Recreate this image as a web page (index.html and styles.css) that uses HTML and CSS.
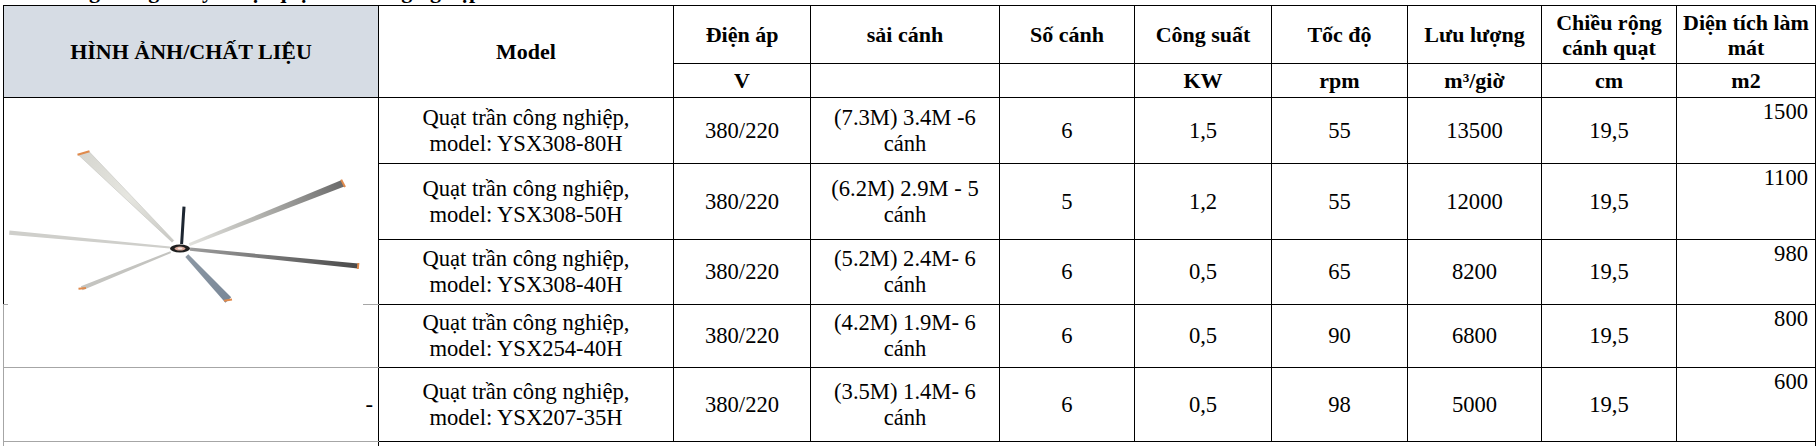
FILE: index.html
```html
<!DOCTYPE html>
<html lang="vi">
<head>
<meta charset="utf-8">
<title>Thông số quạt trần công nghiệp</title>
<link rel="stylesheet" href="styles.css">
</head>
<body>
<div class="page">
  <div class="title"><span>Bảng thông số kỹ thuật quạt trần công nghiệp</span></div>
  <table class="spec">
    <colgroup>
      <col class="c-img"><col class="c-model"><col class="c-volt"><col class="c-span"><col class="c-num">
      <col class="c-pow"><col class="c-rpm"><col class="c-flow"><col class="c-width"><col class="c-area">
    </colgroup>
    <thead>
      <tr class="r-h1">
        <th rowspan="2" class="th-img">HÌNH ẢNH/CHẤT LIỆU</th>
        <th rowspan="2">Model</th>
        <th>Điện áp</th>
        <th>sải cánh</th>
        <th>Số cánh</th>
        <th>Công suất</th>
        <th>Tốc độ</th>
        <th>Lưu lượng</th>
        <th>Chiều rộng<br>cánh quạt</th>
        <th>Diện tích làm<br>mát</th>
      </tr>
      <tr class="r-h2">
        <th>V</th><th></th><th></th><th>KW</th><th>rpm</th><th>m³/giờ</th><th>cm</th><th>m2</th>
      </tr>
    </thead>
    <tbody>
      <tr class="r1">
        <td rowspan="3" class="img-cell">
          <svg class="fan" viewBox="0 0 355 210" width="355" height="210" aria-label="Quạt trần công nghiệp 6 cánh">
            <defs>
              <linearGradient id="gb1" gradientUnits="userSpaceOnUse" x1="165" y1="143" x2="75" y2="55">
                <stop offset="0" stop-color="#c9c9c4"/><stop offset="0.5" stop-color="#e6e6e0"/><stop offset="1" stop-color="#d6d6d0"/>
              </linearGradient>
              <linearGradient id="gb2" gradientUnits="userSpaceOnUse" x1="181" y1="147" x2="335" y2="85">
                <stop offset="0" stop-color="#e2e2de"/><stop offset="0.45" stop-color="#b4b4b0"/><stop offset="1" stop-color="#6a6a6a"/>
              </linearGradient>
              <linearGradient id="gb4" gradientUnits="userSpaceOnUse" x1="182" y1="151" x2="350" y2="168">
                <stop offset="0" stop-color="#9c9c9c"/><stop offset="0.6" stop-color="#6c6c6c"/><stop offset="1" stop-color="#4a4a4a"/>
              </linearGradient>
              <linearGradient id="gb6" gradientUnits="userSpaceOnUse" x1="179" y1="157" x2="220" y2="202">
                <stop offset="0" stop-color="#8c98a4"/><stop offset="1" stop-color="#7a8898"/>
              </linearGradient>
            </defs>
            <rect width="355" height="210" fill="#fff"/>
            <polygon points="162.1,148.4 1.5,132.4 1.1,136.8 161.9,150.4" fill="#cfcfcb"/>
            <polygon points="165.7,142.4 81,53.5 70,56.5 164.1,144.2" fill="url(#gb1)" stroke="#bdbdb8" stroke-width="0.5"/>
            <polygon points="162.3,153.2 72.9,188.3 74.5,192.3 163.1,155" fill="#c4c4c0"/>
            <polygon points="180.7,145.2 333.7,82.1 336.3,88.5 181.9,148" fill="url(#gb2)"/>
            <polygon points="182.15,149.6 350.25,165.5 349.75,170.5 181.85,152.8" fill="url(#gb4)"/>
            <polygon points="180.3,156.2 223.2,199.3 217.4,204.7 177.3,159" fill="url(#gb6)"/>
            <line x1="69.5" y1="56.8" x2="81.5" y2="53.2" stroke="#e08a4c" stroke-width="2"/>
            <line x1="333.2" y1="81.6" x2="337" y2="89" stroke="#e08a4c" stroke-width="2"/>
            <line x1="350.4" y1="165" x2="349.8" y2="171" stroke="#e08a4c" stroke-width="2"/>
            <line x1="70.5" y1="190.8" x2="78" y2="190" stroke="#e08a4c" stroke-width="2"/>
            <line x1="216" y1="202.8" x2="224" y2="201.6" stroke="#e08a4c" stroke-width="2"/>
            <line x1="176" y1="108.7" x2="173.6" y2="146" stroke="#1d2631" stroke-width="3"/>
            <ellipse cx="172" cy="150.5" rx="10" ry="4" fill="#1f1f1f"/>
            <ellipse cx="172" cy="150.6" rx="5.5" ry="2" fill="#d8a89a"/>
            <ellipse cx="172" cy="150.6" rx="2.5" ry="1" fill="#f3e6e0"/>
          </svg>
        </td>
        <td>Quạt trần công nghiệp,<br>model: YSX308-80H</td>
        <td>380/220</td>
        <td>(7.3M) 3.4M -6<br>cánh</td>
        <td>6</td><td>1,5</td><td>55</td><td>13500</td><td>19,5</td>
        <td class="area">1500</td>
      </tr>
      <tr class="r2">
        <td>Quạt trần công nghiệp,<br>model: YSX308-50H</td>
        <td>380/220</td>
        <td>(6.2M) 2.9M - 5<br>cánh</td>
        <td>5</td><td>1,2</td><td>55</td><td>12000</td><td>19,5</td>
        <td class="area">1100</td>
      </tr>
      <tr class="r3">
        <td>Quạt trần công nghiệp,<br>model: YSX308-40H</td>
        <td>380/220</td>
        <td>(5.2M) 2.4M- 6<br>cánh</td>
        <td>6</td><td>0,5</td><td>65</td><td>8200</td><td>19,5</td>
        <td class="area">980</td>
      </tr>
      <tr class="r4">
        <td class="blank"></td>
        <td>Quạt trần công nghiệp,<br>model: YSX254-40H</td>
        <td>380/220</td>
        <td>(4.2M) 1.9M- 6<br>cánh</td>
        <td>6</td><td>0,5</td><td>90</td><td>6800</td><td>19,5</td>
        <td class="area">800</td>
      </tr>
      <tr class="r5">
        <td class="blank dash">-</td>
        <td>Quạt trần công nghiệp,<br>model: YSX207-35H</td>
        <td>380/220</td>
        <td>(3.5M) 1.4M- 6<br>cánh</td>
        <td>6</td><td>0,5</td><td>98</td><td>5000</td><td>19,5</td>
        <td class="area">600</td>
      </tr>
      <tr class="r6">
        <td class="blank"></td>
        <td colspan="9" class="note">Giá trên chưa bao gồm thuế VAT, chi phí lắp đặt và vận chuyển.</td>
      </tr>
    </tbody>
  </table>
</div>
</body>
</html>
```

FILE: styles.css
```css
* {
  box-sizing: border-box;
}

body {
  margin: 0;
  background: #ffffff;
  color: #000000;
  font-family: "Liberation Serif", "Times New Roman", serif;
}

.page {
  padding-left: 3px;
}

.title {
  height: 5px;
  overflow: hidden;
  font-size: 22px;
  font-weight: bold;
  line-height: 26px;
}

.title span {
  display: block;
  margin-top: -22px;
  padding-left: 48px;
  white-space: nowrap;
}

.spec {
  border-collapse: collapse;
  table-layout: fixed;
  width: 1812px;
}

.spec th,
.spec td {
  border: 1px solid #000000;
  padding: 0 4px;
  text-align: center;
  vertical-align: middle;
}

.spec th {
  font-size: 22px;
  font-weight: bold;
  line-height: 25px;
}

.spec td {
  font-size: 22.6px;
  line-height: 26px;
}

.c-img { width: 375px; }
.c-model { width: 295px; }
.c-volt { width: 137px; }
.c-span { width: 189px; }
.c-num { width: 135px; }
.c-pow { width: 137px; }
.c-rpm { width: 136px; }
.c-flow { width: 134px; }
.c-width { width: 135px; }
.c-area { width: 139px; }

.spec .th-img {
  background: #d6dce4;
}

.r-h1 { height: 58px; }
.r-h2 { height: 34px; }
.r1 { height: 66px; }
.r2 { height: 76px; }
.r3 { height: 65px; }
.r4 { height: 63px; }
.r5 { height: 74px; }
.r6 { height: 40px; }

.spec td.img-cell {
  position: relative;
  padding: 0;
  border-bottom-color: #a6a6a6;
}

.fan {
  position: absolute;
  left: 4px;
  top: 0;
  display: block;
}

.spec td.blank {
  border-left-color: #a6a6a6;
  border-top-color: #a6a6a6;
  border-bottom-color: #a6a6a6;
}

.spec td.dash {
  text-align: right;
  padding-right: 5px;
}

.spec td.area {
  text-align: right;
  vertical-align: top;
  padding: 1px 7px 0 4px;
}

.spec td.note {
  text-align: left;
  vertical-align: top;
  padding: 1px 0 0 150px;
}
```
